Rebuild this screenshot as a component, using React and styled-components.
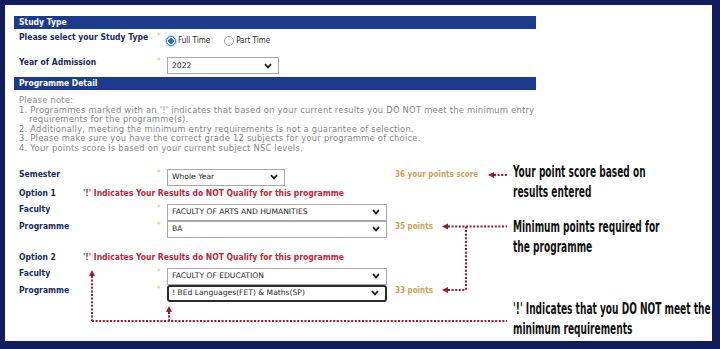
import React from 'react';
import styled, { createGlobalStyle, css } from 'styled-components';

const GlobalStyle = createGlobalStyle`
  html, body {
    margin: 0;
    padding: 0;
    background: #101c5c;
  }
  body {
    font-family: "DejaVu Sans", Verdana, sans-serif;
  }
`;

const cond = `"DejaVu Sans Condensed", "DejaVu Sans", sans-serif`;

const Frame = styled.div`
  width: 720px;
  height: 349px;
  box-sizing: border-box;
  background: #101c5c;
  padding: 5px 8px 8px 5px;
`;

const Sheet = styled.div`
  position: relative;
  height: 100%;
  box-sizing: border-box;
  background: #fff;
  padding: 11px 0 0 9px;
`;

const Form = styled.div`
  width: 522px;
  display: flex;
  flex-direction: column;
`;

const SectionBar = styled.div`
  height: 13px;
  margin-top: ${p => p.$mt || 0}px;
  padding-left: 5px;
  background: #1d3b8e;
  color: #fff;
  font: bold 8.5px/13px ${cond};
  font-stretch: condensed;
`;

const FieldRow = styled.div`
  display: grid;
  grid-template-columns: 136px 12px 228px 1fr;
  align-items: start;
  margin-top: ${p => p.$mt || 0}px;
  padding-left: 5px;
`;

const Label = styled.div`
  font: bold 8.5px/11px ${cond};
  font-stretch: condensed;
  color: #1b2a5c;
  white-space: nowrap;
`;

const Required = styled.div`
  color: #d6c66a;
  font: 8px/8px ${cond};
  padding: 1px 0 0 2px;
`;

const SelectBox = styled.div`
  width: ${p => p.$w}px;
  height: 17px;
  box-sizing: border-box;
  border: 1px solid #a8a8a8;
  background: #fff;
  display: flex;
  align-items: center;
  justify-content: space-between;
  padding: 0 6px 0 4px;
  font: 7.6px/1 "DejaVu Sans", Verdana, sans-serif;
  color: #1e1e1e;
  white-space: nowrap;
  ${p => p.$focused && css`
    border: 2px solid #2b2b2b;
    border-radius: 3px;
    padding-left: 3px;
  `}
`;

const Points = styled.div`
  font: bold 8px/11px ${cond};
  font-stretch: condensed;
  color: #c9a459;
  white-space: nowrap;
`;

const RadioGroup = styled.div`
  display: flex;
  align-items: center;
  height: 17px;
  margin-left: -1px;
`;

const RadioOption = styled.label`
  display: flex;
  align-items: center;
  gap: 2px;
  margin-right: 14px;
  font: 8px/1 ${cond};
  font-stretch: condensed;
  color: #2a2a2a;
`;

const RadioDot = styled.span`
  width: 10px;
  height: 10px;
  box-sizing: border-box;
  border-radius: 50%;
  ${p => p.$checked
    ? css`
      border: 1px solid #2a6fd0;
      background: radial-gradient(circle, #2a6fd0 0 2.6px, #ffffff 3px 100%);
      box-shadow: 0 0 0 1px #b8d3f2;
    `
    : css`
      border: 1px solid #9a9a9a;
      background: #fff;
    `}
`;

const Notes = styled.div`
  margin-top: 6px;
  padding-left: 5px;
  font: 8.4px/9.6px "DejaVu Sans", Verdana, sans-serif;
  letter-spacing: 0.22px;
  color: #848484;
`;

const NoteLine = styled.div`
  white-space: nowrap;
  padding-left: ${p => (p.$indent ? 10 : 0)}px;
`;

const OptionRow = styled.div`
  display: grid;
  grid-template-columns: 64px 1fr;
  margin-top: ${p => p.$mt || 0}px;
  padding-left: 5px;
`;

const Notice = styled.div`
  font: bold 8.5px/11px ${cond};
  font-stretch: condensed;
  color: #b5283b;
  white-space: nowrap;
`;

const Overlay = styled.div`
  position: absolute;
  inset: 0;
  pointer-events: none;
`;

const Callout = styled.div`
  position: absolute;
  left: ${p => p.$x - 5}px;
  top: ${p => p.$y - 5}px;
  font: bold 15px/20px ${cond};
  font-stretch: condensed;
  color: #111;
  white-space: nowrap;
  transform: scaleX(0.67);
  transform-origin: left top;
`;

const Chevron = () => (
  <svg width="8" height="6" viewBox="0 0 8 6">
    <path d="M1 1.2 L4 4.4 L7 1.2" fill="none" stroke="#1e1e1e" strokeWidth="1.8" />
  </svg>
);

const Select = ({ value, width, focused }) => (
  <SelectBox $w={width} $focused={focused}>
    <span>{value}</span>
    <Chevron />
  </SelectBox>
);

const Field = ({ label, mt, children, points }) => (
  <FieldRow $mt={mt}>
    <Label>{label}</Label>
    <Required>*</Required>
    <div>{children}</div>
    {points && <Points>{points}</Points>}
  </FieldRow>
);

const notes = [
  'Please note:',
  "1. Programmes marked with an '!' indicates that based on your current results you DO NOT meet the minimum entry",
  'requirements for the programme(s).',
  '2. Additionally, meeting the minimum entry requirements is not a guarantee of selection.',
  '3. Please make sure you have the correct grade 12 subjects for your programme of choice.',
  '4. Your points score is based on your current subject NSC levels.',
];

const red = '#a3162e';

const LeftArrow = ({ x, y }) => <path d={`M${x} ${y} L${x + 6} ${y - 3} L${x + 6} ${y + 3} Z`} fill={red} />;
const UpArrow = ({ x, y }) => <path d={`M${x} ${y} L${x - 3} ${y + 6} L${x + 3} ${y + 6} Z`} fill={red} />;

const Arrows = () => (
  <svg width="707" height="336" style={{ position: 'absolute', left: 0, top: 0 }}>
    <g transform="translate(-5 -5)" stroke={red} strokeWidth="2" strokeDasharray="2 1.6" fill="none">
      <path d="M494 175 H507" />
      <path d="M448 226.5 H507" />
      <path d="M466 226.5 V290" />
      <path d="M448 290 H466" />
      <path d="M92 276 V321" />
      <path d="M169 312 V321" />
      <path d="M92 321 H507" />
    </g>
    <g transform="translate(-5 -5)">
      <LeftArrow x={488} y={175} />
      <LeftArrow x={442} y={226.5} />
      <LeftArrow x={442} y={290} />
      <UpArrow x={92} y={270} />
      <UpArrow x={169} y={306} />
    </g>
  </svg>
);

const App = () => (
  <>
    <GlobalStyle />
    <Frame>
      <Sheet>
        <Form>
          <SectionBar>Study Type</SectionBar>
          <Field label="Please select your Study Type" mt={3}>
            <RadioGroup>
              <RadioOption><RadioDot $checked />Full Time</RadioOption>
              <RadioOption><RadioDot />Part Time</RadioOption>
            </RadioGroup>
          </Field>
          <Field label="Year of Admission" mt={8}>
            <Select value="2022" width={112} />
          </Field>

          <SectionBar $mt={3}>Programme Detail</SectionBar>
          <Notes>
            {notes.map((n, i) => (
              <NoteLine key={i} $indent={i === 2}>{n}</NoteLine>
            ))}
          </Notes>

          <Field label="Semester" mt={15} points="36 your points score">
            <Select value="Whole Year" width={118} />
          </Field>

          <OptionRow $mt={2.5}>
            <Label>Option 1</Label>
            <Notice>'!' Indicates Your Results do NOT Qualify for this programme</Notice>
          </OptionRow>
          <Field label="Faculty" mt={4.5}>
            <Select value="FACULTY OF ARTS AND HUMANITIES" width={220} />
          </Field>
          <Field label="Programme" points="35 points">
            <Select value="BA" width={220} />
          </Field>

          <OptionRow $mt={14.5}>
            <Label>Option 2</Label>
            <Notice>'!' Indicates Your Results do NOT Qualify for this programme</Notice>
          </OptionRow>
          <Field label="Faculty" mt={4.5}>
            <Select value="FACULTY OF EDUCATION" width={220} />
          </Field>
          <Field label="Programme" points="33 points">
            <Select value="! BEd Languages(FET) & Maths(SP)" width={220} focused />
          </Field>
        </Form>

        <Overlay>
          <Arrows />
          <Callout $x={513} $y={162}>Your point score based on<br />results entered</Callout>
          <Callout $x={513} $y={217}>Minimum points required for<br />the programme</Callout>
          <Callout $x={513} $y={299}>'!' Indicates that you DO NOT meet the<br />minimum requirements</Callout>
        </Overlay>
      </Sheet>
    </Frame>
  </>
);

export default App;
